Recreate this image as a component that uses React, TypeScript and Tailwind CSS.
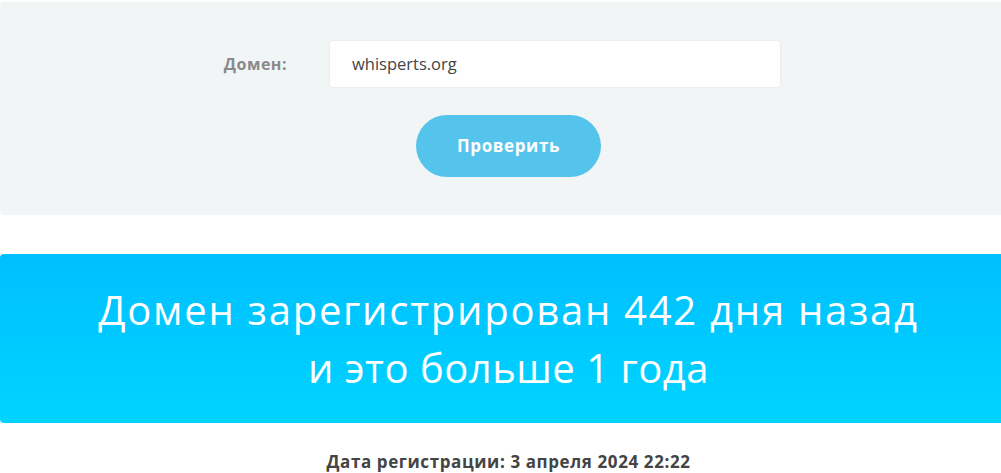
import React from "react";

export default function App() {
  return (
    <div className="w-full h-[473px] overflow-hidden bg-white">
      <div className="w-[1017px] pt-[2px]">
        <div className="bg-[#f2f5f6] rounded-[4px] h-[213px] flex flex-col items-center pt-[38px]">
          <div className="flex items-center">
            <div
              className="w-[287px] text-right text-[16px] font-bold text-[#8a8a8a] tracking-[0.5px]"
              style={{ fontFamily: '"Open Sans", sans-serif' }}
            >
              Домен:
            </div>
            <div className="ml-[42px] w-[452px] h-[48px] bg-white border border-[#ececec] rounded-[3px] flex items-center pl-[22px]">
              <span
                className="text-[16.5px] text-[#444]"
                style={{ fontFamily: '"Open Sans", sans-serif' }}
              >
                whisperts.org
              </span>
            </div>
            <div className="w-[236px]" />
          </div>
          <button
            className="mt-[27px] w-[185px] h-[62px] rounded-full bg-[#55c4ec] text-white text-[17px] font-bold tracking-[0.6px]"
            style={{ fontFamily: '"Open Sans", sans-serif' }}
          >
            Проверить
          </button>
        </div>
        <div
          className="mt-[39px] h-[169px] rounded-[4px] bg-gradient-to-b from-[#00bfff] to-[#00d4ff] flex flex-col items-center justify-center text-white text-[40px] leading-[58px]"
          style={{ fontFamily: '"Open Sans", sans-serif' }}
        >
          <div className="tracking-[1.75px]">Домен зарегистрирован 442 дня назад</div>
          <div className="tracking-[0.5px]">и это больше 1 года</div>
        </div>
        <div
          className="mt-[26px] text-center text-[17px] font-bold text-[#444] tracking-[0.6px]"
          style={{ fontFamily: '"Open Sans", sans-serif' }}
        >
          Дата регистрации: 3 апреля 2024 22:22
        </div>
      </div>
    </div>
  );
}
